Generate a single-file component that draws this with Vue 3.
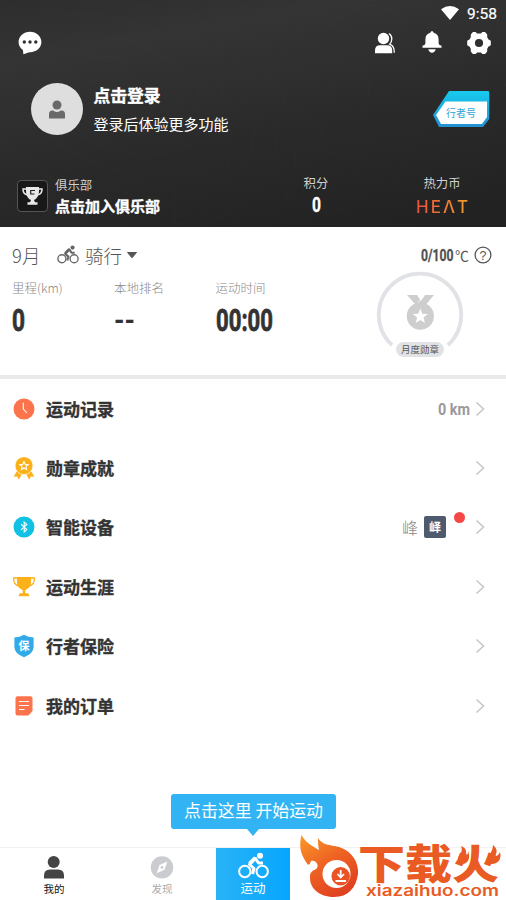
<script setup>
const rows = [
  { icon: 'clock', label: '运动记录', km: true },
  { icon: 'medal', label: '勋章成就' },
  { icon: 'bluetooth', label: '智能设备', device: true },
  { icon: 'trophy', label: '运动生涯' },
  { icon: 'shield', label: '行者保险' },
  { icon: 'order', label: '我的订单' },
]
const rings = [0, 1, 2, 3, 4, 5, 6]
</script>

<template>
  <div class="screen">
    <header class="hero">
      <svg class="contours" viewBox="0 0 506 227" fill="none" stroke="#fff" stroke-opacity=".016">
        <ellipse v-for="n in rings" :key="'a' + n" cx="120" cy="95" :rx="35 + n * 27" :ry="18 + n * 18" :transform="`rotate(${12 + n * 4} 120 95)`" />
        <ellipse v-for="n in rings" :key="'b' + n" cx="345" cy="110" :rx="20 + n * 20" :ry="46 + n * 32" :transform="`rotate(${18 + n * 2} 345 110)`" />
      </svg>

      <div class="status">
        <svg width="18" height="14" viewBox="0 0 18 14"><path d="M0 3.2Q9-3.2 18 3.2L9 14Z" fill="#fff" /></svg>
        <span>9:58</span>
      </div>

      <div class="tools">
        <svg class="chat" width="24" height="24" viewBox="0 0 24 24">
          <path d="M12 .8C18.300.8 23.400 5.300 23.400 11S18.500 21 12 21.200C10.500 21.300 7.500 22.600 5.400 23.200L4.900 19C2.200 17.200.6 14.400.6 11 .6 5.300 5.700.8 12 .8Z" fill="#fff" />
          <g fill="#303030"><circle cx="6.300" cy="11" r="1.700" /><circle cx="12" cy="11" r="1.700" /><circle cx="17.800" cy="11" r="1.700" /></g>
        </svg>
        <svg class="friends" width="22" height="22" viewBox="0 0 22 22">
          <circle cx="9.500" cy="6.500" r="5.700" fill="#fff" />
          <path d="M1 21.200V18.500Q1 13.300 6.200 13.300H13Q18.200 13.300 18.200 18.500V21.200Z" fill="#fff" />
          <path d="M15 1.500Q18 3.700 17.800 7 17.700 10.300 15.700 12.200 20.500 14 20.300 20.800" fill="none" stroke="#fff" stroke-width="1.300" />
        </svg>
        <svg class="bell" width="20" height="23" viewBox="0 0 20 23">
          <path d="M10 .3C11 .3 11.600 1 11.700 1.800 15 2.600 16.600 5 16.600 8.500V12.500Q17 14.300 19.500 14.800V16.700H.5V14.800Q3 14.300 3.400 12.500V8.500C3.400 5 5 2.600 8.300 1.800 8.400 1 9 .3 10 .3ZM6.300 18.300H13.700Q12.800 21.700 10 21.700T6.300 18.300Z" fill="#fff" />
        </svg>
        <svg class="gear" width="24" height="24" viewBox="0 0 24 24">
          <path fill="#fff" stroke="#fff" stroke-width="1.600" stroke-linejoin="round" d="M6.300 1.800H8.300L9.700 3.300H14.300L15.700 1.800H17.700L19.400 3.800V6.500L20.800 8.800 23 10.200V13.800L20.800 15.200 19.400 17.500V20.200L17.700 22.200H15.700L14.300 20.700H9.700L8.300 22.200H6.300L4.600 20.200V17.500L3.200 15.200 1 13.800V10.200L3.200 8.800 4.600 6.500V3.800Z" />
          <circle cx="12" cy="12" r="4.100" fill="#2f2f2f" />
        </svg>
      </div>

      <div class="profile">
        <div class="avatar">
          <svg width="18" height="19" viewBox="0 0 18 19" fill="#696969"><circle cx="9" cy="5" r="4.500" /><path d="M1 18V14Q1 10.500 4.500 10.500H5.300Q9 13.500 12.700 10.500H13.500Q17 10.500 17 14V18Q17 18.500 16.400 18.500H1.600Q1 18.500 1 18Z" /></svg>
        </div>
        <div class="who">
          <b>点击登录</b>
          <span>登录后体验更多功能</span>
        </div>
        <div class="badge">
          <svg width="58" height="38" viewBox="0 0 58 38">
            <defs>
              <linearGradient id="tag" x1="0" y1="0" x2="0" y2="1"><stop offset="0" stop-color="#17cbee" /><stop offset="1" stop-color="#248ed0" /></linearGradient>
            </defs>
            <path d="M17 1H56Q57.300 1 57.300 2.500V29L51 37H7L1 25Z" fill="url(#tag)" />
            <path d="M13.500 11.500H55V27L50 34H9L4 25Z" fill="#fff" />
          </svg>
          <span>行者号</span>
        </div>
      </div>

      <div class="assets">
        <div class="club-icon">
          <svg width="21" height="20" viewBox="0 0 21 20">
            <path d="M4 1H17V5C17 10 14.500 13 12 14L13 16.300H15.500V18.800H5.500V16.300H8L9 14C6.500 13 4 10 4 5Z" fill="#e8e8e8" />
            <path d="M4 3H1Q1 8.500 6 9M17 3H20Q20 8.500 15 9" fill="none" stroke="#e8e8e8" stroke-width="1.500" />
            <path d="M13 4.500H8.700V8H12.500" fill="none" stroke="#222" stroke-width="1.200" />
          </svg>
        </div>
        <div class="club"><span>俱乐部</span><b>点击加入俱乐部</b></div>
        <div class="asset points">
          <span>积分</span>
          <svg width="9" height="17" viewBox="0 0 9 17"><text x="0" y="15" textLength="9" lengthAdjust="spacingAndGlyphs" class="digits" font-size="20" fill="#fff" stroke="#fff">0</text></svg>
        </div>
        <div class="asset heat"><span>热力币</span><i>HEΛT</i></div>
      </div>
    </header>

    <section class="summary">
      <div class="filter">
        <span class="month">9月</span>
        <svg class="bike" width="22" height="19" viewBox="0 0 31 27" fill="none" stroke="#666" stroke-width="1.900"><circle cx="6.800" cy="19.500" r="5.700" /><circle cx="24.200" cy="19.500" r="5.700" /><path d="M14.500 22 16 16.500 11.500 12.500 17.500 6.500 20.500 11H25" stroke-width="3" stroke-linejoin="round" /><path d="M10 10.500 16 4.500 19 6 14 12Z" fill="#666" stroke="none" /><circle cx="22" cy="3.700" r="3" fill="#666" stroke="none" /></svg>
        <span class="sport">骑行</span>
        <svg width="10" height="6" viewBox="0 0 10 6"><path d="M.5.500H9.500L5 5.800Z" fill="#555" stroke="#555" stroke-linejoin="round" /></svg>
        <div class="degree">
          <svg width="34" height="16" viewBox="0 0 34 16"><text x="0" y="13.500" textLength="32.500" lengthAdjust="spacingAndGlyphs" class="digits" font-size="16.500" fill="#505050" stroke="#505050">0/100</text></svg>
          <span>℃</span>
          <svg class="help" width="18" height="18" viewBox="0 0 18 18"><circle cx="9" cy="9" r="7.900" fill="none" stroke="#555" stroke-width="1.300" /><text class="question" x="9" y="13.500" text-anchor="middle" font-size="12.500" fill="#555">?</text></svg>
        </div>
      </div>
      <div class="figures">
        <div class="figure">
          <span>里程(km)</span>
          <svg width="14" height="26" viewBox="0 0 14 26"><text x="0" y="24.500" textLength="13" lengthAdjust="spacingAndGlyphs" class="digits big" font-size="31.500" fill="#333" stroke="#333">0</text></svg>
        </div>
        <div class="figure">
          <span>本地排名</span>
          <svg width="22" height="26" viewBox="0 0 22 26"><text x="0" y="24" textLength="21" lengthAdjust="spacingAndGlyphs" class="digits" font-size="30" fill="#333">--</text></svg>
        </div>
        <div class="figure">
          <span>运动时间</span>
          <svg width="58" height="26" viewBox="0 0 58 26"><text x="0" y="24.500" textLength="57" lengthAdjust="spacingAndGlyphs" class="digits big" font-size="31.500" fill="#333" stroke="#333">00:00</text></svg>
        </div>
        <div class="monthly">
          <svg width="88" height="88" viewBox="0 0 88 88">
            <path d="M16.100 73.200A41.200 41.200 0 1 1 71.900 73.200" fill="none" stroke="#e1e2e6" stroke-width="3.800" />
            <path d="M31 23H41L45 29 49 23H58L50.500 32H39Z" fill="#cecece" />
            <path d="M42 31 45.500 26" stroke="#fff" stroke-width=".8" />
            <circle cx="44.300" cy="44.200" r="13.600" fill="#cecece" />
            <path d="M44.300 36.500 46.300 41.700 51.800 42 47.500 45.500 49 50.900 44.300 47.900 39.600 50.900 41.100 45.500 36.800 42 42.300 41.700Z" fill="#fff" />
          </svg>
          <span>月度勋章</span>
        </div>
      </div>
    </section>

    <main class="list">
      <div v-for="row in rows" :key="row.label" class="row">
        <svg class="row-icon" width="24" height="24" viewBox="0 0 24 24">
          <template v-if="row.icon === 'clock'"><circle cx="12" cy="12" r="10.500" fill="#fb744c" /><path d="M11.300 5.800V12L15 16" fill="none" stroke="#fff" stroke-width="1.100" /></template>
          <template v-else-if="row.icon === 'medal'">
            <path d="M4.800 15 1.700 20.700 5 20.500 7 23.500 10.300 17ZM19.200 15 22.300 20.700 19 20.500 17 23.500 13.700 17Z" fill="#fbb11a" />
            <circle cx="12" cy="9.700" r="9" fill="#fbb11a" stroke="#fff" stroke-width=".7" />
            <path d="M12 5.700 13.200 8.400 16.100 8.700 13.900 10.600 14.500 13.500 12 12 9.500 13.500 10.100 10.600 7.900 8.700 10.800 8.400Z" fill="none" stroke="#fff" stroke-width="1.100" />
          </template>
          <template v-else-if="row.icon === 'bluetooth'"><circle cx="12" cy="12" r="10.500" fill="#11c1e3" /><path d="M9 9.200 14.800 14.600 12.200 17V7L14.800 9.400 9 14.800" fill="none" stroke="#fff" stroke-width="1.100" /></template>
          <template v-else-if="row.icon === 'trophy'">
            <path d="M5 2H19V8Q18.500 13 13.300 15V18.300H15.800Q17 18.300 17.300 21.300H6.700Q7 18.300 8.200 18.300H10.700V15Q5.500 13 5 8Z" fill="#fbb11a" />
            <path d="M6 3H1.500Q1.500 10 7 11M18 3H22.500Q22.500 10 17 11" fill="none" stroke="#fbb11a" stroke-width="1.300" />
          </template>
          <template v-else-if="row.icon === 'shield'"><path d="M12 .8Q16 3.200 21.600 3.600V13Q21.600 19.500 12 23.200 2.400 19.500 2.400 13V3.600Q8 3.200 12 .8Z" fill="#31abe8" /><text x="12" y="16" text-anchor="middle" font-size="11" font-weight="700" fill="#fff">保</text></template>
          <template v-else><path d="M5.500 2.200H18.500Q20.500 2.200 20.500 4.200V17L16.500 21.500H5.500Q3.500 21.500 3.500 19.500V4.200Q3.500 2.200 5.500 2.200Z" fill="#fb744c" /><path d="M7 7.500H17M7 11.500H17M7 15.500H12.500" stroke="#fff" stroke-width="1.200" /></template>
        </svg>
        <b>{{ row.label }}</b>
        <div class="value">
          <svg v-if="row.km" width="33" height="18" viewBox="0 0 33 18"><text x="1" y="14.500" textLength="32" lengthAdjust="spacingAndGlyphs" class="digits" font-size="17" fill="#999">0 km</text></svg>
          <template v-if="row.device"><span class="brand">峰</span><span class="brand-tile">峄</span><i class="dot"></i></template>
        </div>
        <svg class="chevron" width="10" height="16" viewBox="0 0 10 16"><path d="M1.500 1.500 8.500 8 1.500 14.500" fill="none" stroke="#c9c9c9" stroke-width="1.700" /></svg>
      </div>
    </main>

    <nav class="tabs">
      <div class="tab active">
        <svg width="22" height="25" viewBox="0 0 22 25" fill="#444"><circle cx="10.700" cy="7" r="6" /><path d="M1 23.500V20.500Q1 14.500 7 14.500H15Q21 14.500 21 20.500V23.500Z" /></svg>
        <span>我的</span>
      </div>
      <div class="tab">
        <svg width="24" height="25" viewBox="0 0 24 25"><circle cx="12" cy="12.400" r="11.200" fill="#cbcccf" /><path d="M17.300 6.500 14.500 14.800 6.700 18.300 9.500 10Z" fill="#fff" /><circle cx="12" cy="12.400" r="1.400" fill="#cbcccf" /></svg>
        <span>发现</span>
      </div>
      <div class="tab go">
        <svg width="31" height="27" viewBox="0 0 31 27" fill="none" stroke="#fff" stroke-width="2"><circle cx="6.800" cy="19.500" r="5.700" /><circle cx="24.200" cy="19.500" r="5.700" /><path d="M14.500 22 16 16.500 11.500 12.500 17.500 6.500 20.500 11H25" stroke-width="3" stroke-linejoin="round" /><path d="M10 10.500 16 4.500 19 6 14 12Z" fill="#fff" stroke="none" /><circle cx="22" cy="3.700" r="3" fill="#fff" stroke="none" /></svg>
        <span>运动</span>
      </div>
    </nav>

    <div class="tip">点击这里 开始运动</div>

    <svg class="watermark" width="210" height="69" viewBox="0 0 210 69">
      <defs>
        <linearGradient id="flame" x1="0" y1="0" x2=".6" y2="1"><stop offset="0" stop-color="#f99a28" /><stop offset=".5" stop-color="#ef6424" /><stop offset="1" stop-color="#df4220" /></linearGradient>
      </defs>
      <path d="M5.500 4C10 12 16 15 23 19 22 14 22 11 22 7 26 14 34 14 43 16 57 20 63 33 62 43 60 57 52 66 38 66 23 66 13 57 14 45 14 41 18 39 19 38L12 34C6 25 2 18 5.500 4Z" fill="url(#flame)" />
      <path d="M15 30C20 28 24 35 20 38 16 41 13 38 10 33 14 35 14 32 15 30Z" fill="#fff" />
      <circle cx="40.500" cy="43" r="14" fill="#fff" /><circle cx="44.700" cy="45.300" r="9.200" fill="#e95325" />
      <path d="M44.700 39V46M41.500 43 44.700 46.500 48 43M39.500 50H50" fill="none" stroke="#fff" stroke-width="1.800" />
      <text class="mark" x="62" y="48" font-size="40.500" font-weight="900" textLength="141" lengthAdjust="spacingAndGlyphs">下载火</text>
      <path class="wisp" d="M166 33C159 29 163 24 165 22 166 20 166 17 165 15 171 17 171 22 169 25 172 24 172 22 172 20 175 27 172 33 166 33ZM196 33C190 32 190 27 193 24 195 22 197 18 197 14 202 18 201 22 199 25 202 25 203 23 204 21 206 28 202 33 196 33Z" />
      <text class="mark domain" x="70" y="65" font-size="15" font-weight="600" textLength="133" lengthAdjust="spacingAndGlyphs">xiazaihuo.com</text>
    </svg>
  </div>
</template>

<style>
body { margin: 0; }
</style>

<style scoped>
.screen { position: relative; width: 506px; height: 900px; overflow: hidden; background: #fff; font-family: "Noto Sans CJK SC", sans-serif; color: #333; display: flex; flex-direction: column; }
.screen * { box-sizing: border-box; }
.screen svg { display: block; flex: none; overflow: visible; }
.screen span, .screen b { white-space: nowrap; }
.screen b { -webkit-text-stroke: .35px currentColor; }
.digits { font-family: Roboto, sans-serif; font-weight: 700; stroke-width: .3px; }
.big { stroke-width: .8px; }
.hero { position: relative; height: 227px; background: linear-gradient(170deg, #2d2d2d, #343434 20%, #292929 60%, #212121); color: #fff; flex: none; overflow: hidden; }
.hero .contours { position: absolute; inset: 0; width: 506px; height: 227px; }
.status { height: 26px; padding: 6px 9px 0 0; display: flex; justify-content: flex-end; gap: 8px; font: 400 15.500px/16px Roboto, sans-serif; }
.status span { -webkit-text-stroke: .2px #fff; }
.tools { height: 33px; padding: 5px 15px 0 18px; display: flex; align-items: flex-start; }
.friends { margin: 1px 26px 0 auto; }
.bell { margin-right: 25px; }
.profile { height: 100px; padding: 24px 16px 0 31px; display: flex; align-items: flex-start; }
.avatar { width: 52px; height: 52px; border-radius: 50%; background: #dedede; display: flex; align-items: center; justify-content: center; }
.who { display: flex; flex-direction: column; margin-left: 10.500px; }
.who b { font-size: 16.800px; line-height: 25px; }
.who span { font-size: 15px; line-height: 32px; }
.badge { margin: 7px 0 0 auto; display: grid; }
.badge > * { grid-area: 1 / 1; }
.badge span { color: #2fa5d8; font-size: 10px; line-height: 16px; margin: 15px 0 0 14px; z-index: 1; }
.assets { height: 68px; padding: 17px 0 0 17px; display: grid; grid-template-columns: 38px 203px 116px 136px; align-items: start; }
.club-icon { width: 31px; height: 32px; margin-top: 4px; border: 1px solid #555; border-radius: 4px; background: #181818; display: flex; align-items: center; justify-content: center; }
.club { display: flex; flex-direction: column; }
.club span, .asset span { color: #d0d0d0; font-size: 12.400px; line-height: 18px; }
.club b { font-size: 15px; line-height: 24px; }
.asset { display: flex; flex-direction: column; align-items: center; margin-top: -2px; }
.points svg { margin-top: 5px; }
.heat i { font: 500 17px/20px Inter, sans-serif; letter-spacing: 2px; margin: 5px -2px 0 0; background: linear-gradient(90deg, #eb4e39, #f1a02e); background-clip: text; color: transparent; -webkit-text-stroke: 0; }
.summary { height: 152px; border-bottom: 4px solid #e9e9e9; flex: none; color: #555; }
.filter { height: 50px; padding: 5px 14px 0 12px; display: flex; align-items: center; }
.month { font-size: 18.500px; font-weight: 300; width: 45px; }
.sport { font-size: 18.500px; font-weight: 300; margin: 0 5px 0 6px; }
.degree { display: flex; align-items: center; margin-left: auto; }
.degree span { font-size: 14px; margin-right: 5px; }
.question { font-family: "Liberation Sans", sans-serif; }
.figures { height: 98px; padding-left: 12px; display: grid; grid-template-columns: 102px 101.500px 159.500px 90px; align-items: start; }
.figure { display: flex; flex-direction: column; gap: 9px; padding-top: 2px; }
.figure span { font-size: 12.500px; line-height: 18px; color: #888; font-weight: 300; }
.monthly { margin-top: -5px; display: grid; justify-items: center; }
.monthly > * { grid-area: 1 / 1; }
.monthly span { align-self: end; z-index: 1; background: #e1e2e6; border-radius: 8px; padding: 0 4.500px; font-size: 9.500px; line-height: 15px; margin-bottom: 3px; }
.list { height: 356.500px; flex: none; }
.row { height: 59.400px; display: flex; align-items: center; padding: 0 21px 0 12px; }
.row b { font-size: 17px; line-height: 24px; margin-left: 10px; }
.value { margin: 0 5px 0 auto; display: flex; align-items: center; }
.brand { font-size: 16px; font-weight: 300; color: #888; margin-right: 6px; }
.brand-tile { width: 22px; height: 22px; background: #4e5b6f; color: #fff; border-radius: 2px; font-size: 12px; font-weight: 700; line-height: 21px; text-align: center; }
.dot { width: 11px; height: 11px; border-radius: 50%; background: #f64747; margin: -19px 5px 0 8px; }
.tabs { height: 53px; margin-top: auto; border-top: 1px solid #f2f2f2; display: grid; grid-template-columns: 108px 108px 74px; flex: none; }
.tab { display: flex; flex-direction: column; align-items: center; padding-top: 7px; font-size: 10.500px; line-height: 17px; color: #aaa; }
.active { color: #111; }
.go { background: linear-gradient(90deg, #29b3f6, #06a6ff); color: #fff; font-size: 12.500px; padding-top: 4px; }
.tip { position: absolute; left: 171px; top: 794px; width: 165px; height: 35px; border-radius: 3px; background: #32b4f4; color: #fff; font-size: 16.900px; line-height: 32px; text-align: center; white-space: nowrap; }
.tip::after { content: ""; position: absolute; left: 76px; top: 34.500px; border: 6.500px solid transparent; border-top: 7px solid #32b4f4; border-bottom: 0; }
.watermark { position: absolute; left: 296px; top: 831px; }
.mark { fill: #e95b23; stroke: #fff; stroke-width: 1.600px; paint-order: stroke; }
.wisp { fill: #e95b23; }
.domain { font-family: Inter, sans-serif; }
</style>
